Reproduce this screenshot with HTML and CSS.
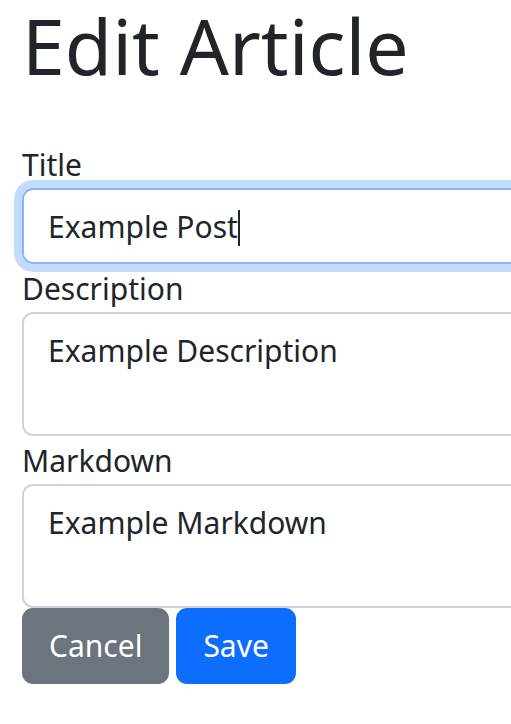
FILE: index.html
```html
<!DOCTYPE html>
<html lang="en">
<head>
<meta charset="utf-8">
<title>Edit Article</title>
<link rel="stylesheet" href="styles.css">
</head>
<body>
<main class="page">
  <h1 class="page-title">Edit Article</h1>
  <form class="article-form">
    <label class="field-label" for="title">Title</label>
    <div class="field field-focus" id="title"><span class="field-text">Example Post</span><span class="caret"></span></div>
    <label class="field-label" for="description">Description</label>
    <div class="field field-area" id="description"><span class="field-text">Example Description</span></div>
    <label class="field-label" for="markdown">Markdown</label>
    <div class="field field-area" id="markdown"><span class="field-text">Example Markdown</span></div>
    <div class="actions">
      <button type="button" class="btn btn-secondary">Cancel</button>
      <button type="button" class="btn btn-primary">Save</button>
    </div>
  </form>
</main>
</body>
</html>
```
FILE: styles.css
```css
html, body {
  margin: 0;
  padding: 0;
  background: #ffffff;
  overflow: hidden;
}
body {
  font-family: "Noto Sans", "Open Sans", sans-serif;
  color: #212529;
  font-size: 30px;
  line-height: 1.5;
}
.page {
  padding-left: 22px;
}
.page-title {
  margin: 0;
  height: 140px;
  font-size: 77px;
  font-weight: 400;
  line-height: 92px;
  white-space: nowrap;
}
.article-form {
  display: flex;
  flex-direction: column;
  width: 600px;
}
.field-label {
  display: block;
  height: 48px;
  font-size: 30px;
  line-height: 50px;
}
.field {
  box-sizing: border-box;
  border: 2px solid #ced4da;
  border-radius: 11px;
  padding: 12px 24px;
  height: 76px;
  font-size: 30px;
  line-height: 50px;
  display: flex;
  align-items: flex-start;
}
.field-area {
  height: 124px;
}
.field-focus {
  border-color: #86b7fe;
  box-shadow: 0 0 0 8px rgba(13, 110, 253, 0.25);
}
.caret {
  display: inline-block;
  width: 2px;
  height: 36px;
  margin-top: 8px;
  background: #212529;
}
.actions {
  display: flex;
  gap: 7px;
}
.btn {
  font-family: inherit;
  font-size: 30px;
  line-height: 50px;
  height: 76px;
  padding: 11px 25px;
  border: 2px solid transparent;
  border-radius: 11px;
  color: #ffffff;
}
.btn-secondary {
  background: #6c757d;
  border-color: #6c757d;
}
.btn-primary {
  background: #0d6efd;
  border-color: #0d6efd;
}
```
